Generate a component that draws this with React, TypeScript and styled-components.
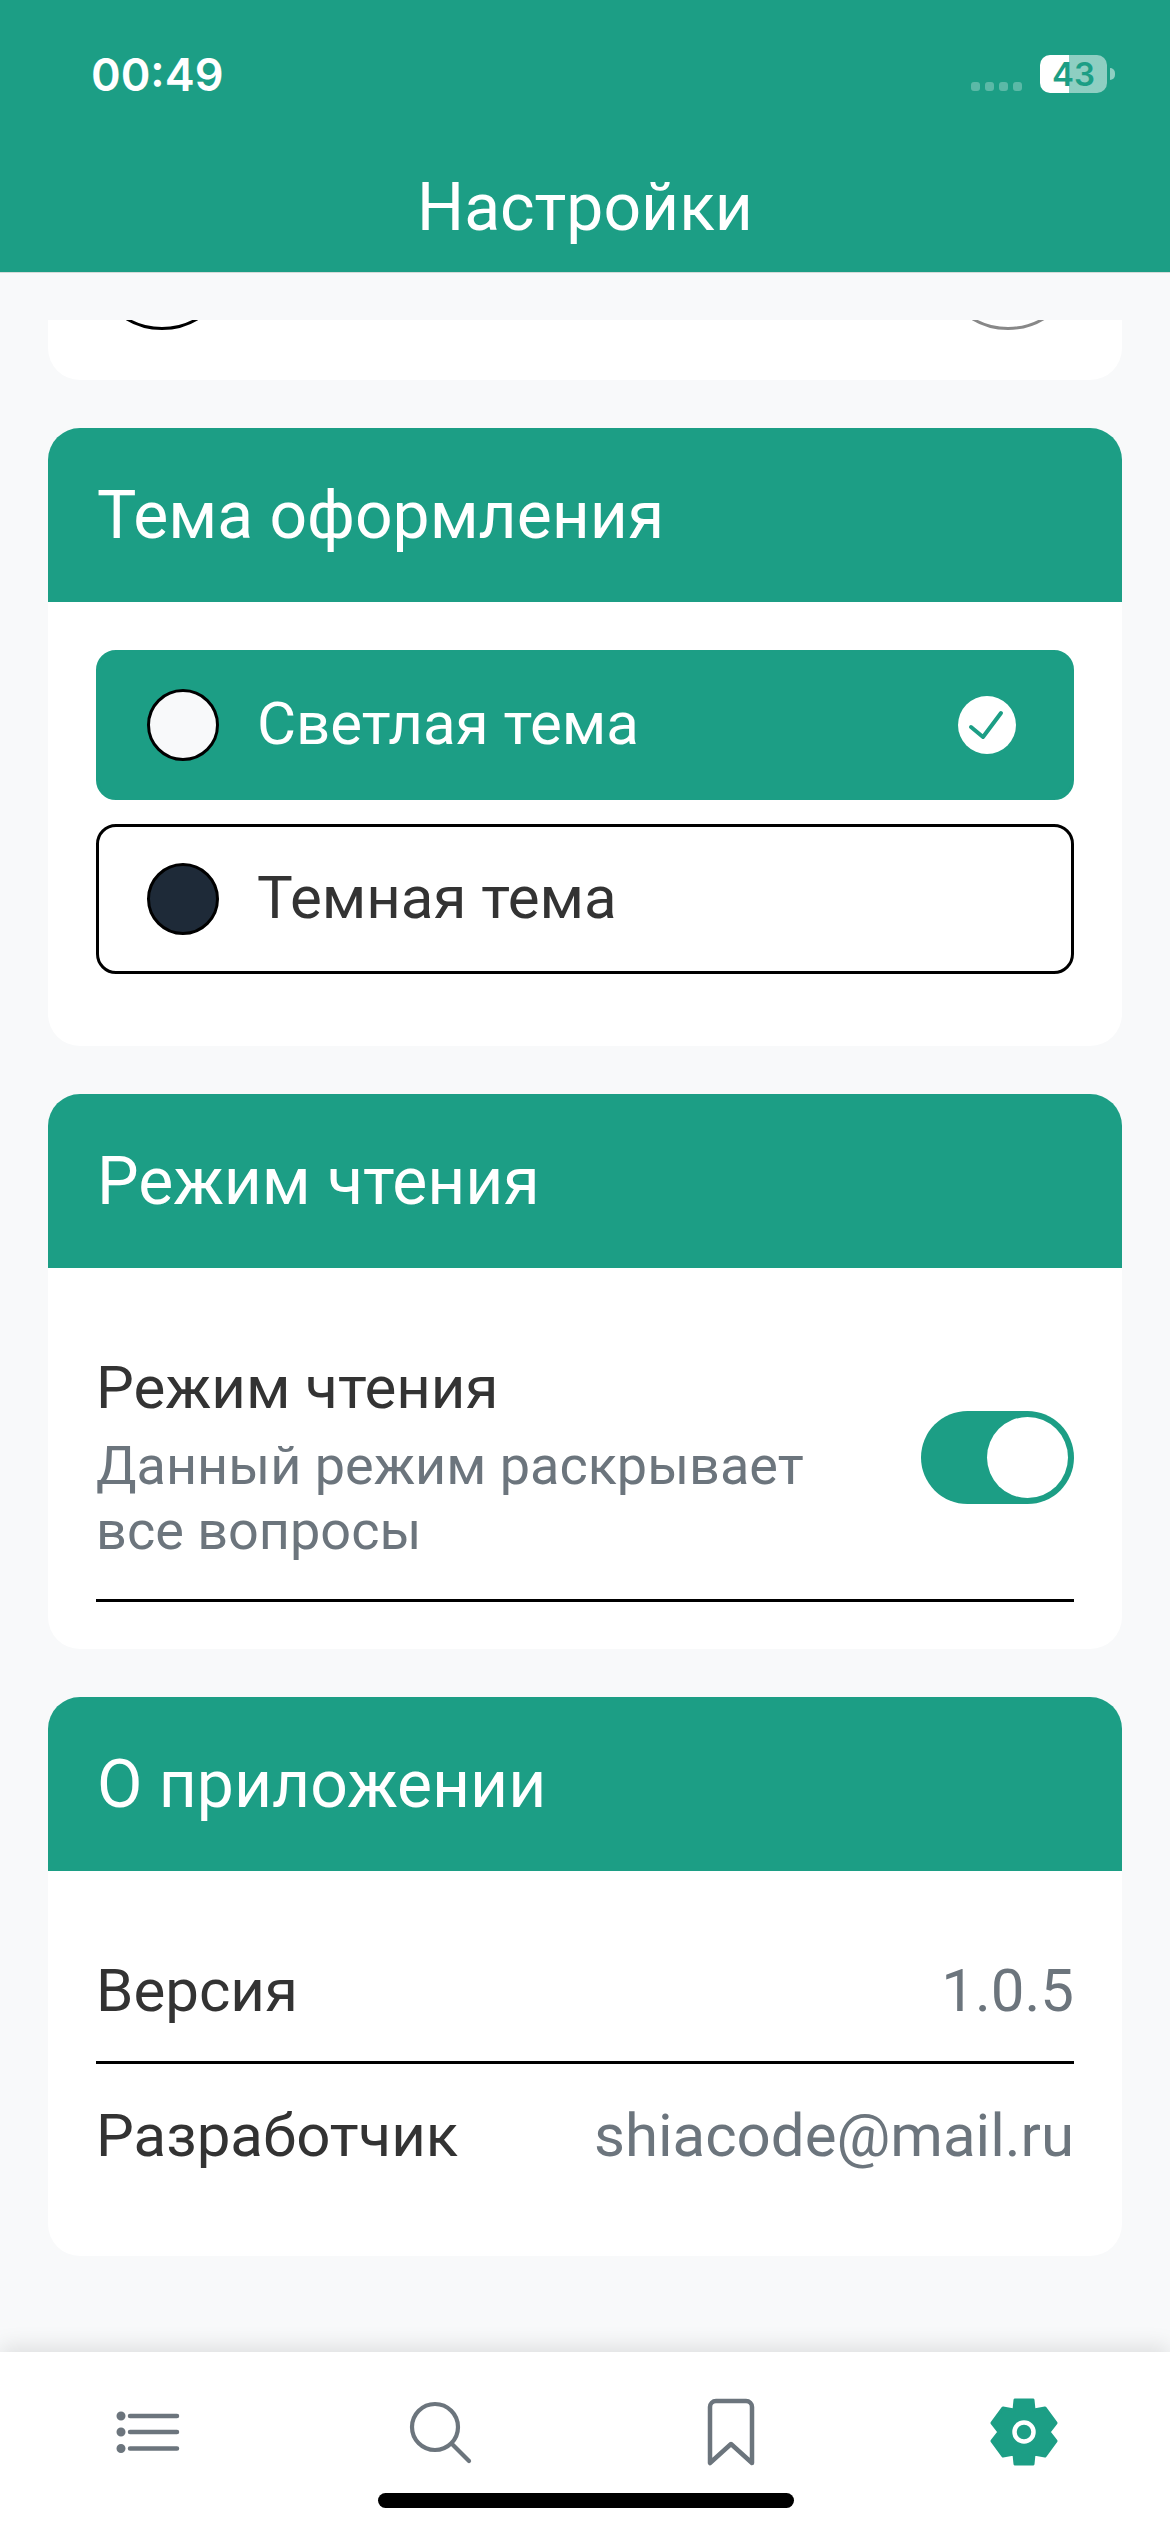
import styled, { createGlobalStyle } from 'styled-components'

const TEAL = '#1c9e85'
const GREY = '#6c757d'

const GlobalStyle = createGlobalStyle`
  html, body {
    margin: 0;
    padding: 0;
    background: #f8f9fa;
  }

  * {
    box-sizing: border-box;
  }
`

const Screen = styled.div`
  width: 1170px;
  height: 2532px;
  display: flex;
  flex-direction: column;
  background: #f8f9fa;
  font-family: Roboto, "Noto Sans", sans-serif;
  overflow: hidden;
`

const Header = styled.header`
  height: 273px;
  flex: none;
  display: flex;
  flex-direction: column;
  background: ${TEAL};
  border-bottom: 1px solid #d5dbd9;
`

const StatusBar = styled.div`
  height: 170px;
  padding: 47px 55px 0 91px;
  display: flex;
  justify-content: space-between;
  align-items: flex-start;
`

const Clock = styled.span`
  font-family: Inter, sans-serif;
  font-size: 45px;
  line-height: 56px;
  font-weight: 600;
  color: #fff;
`

const StatusIcons = styled.div`
  display: flex;
  align-items: flex-end;
  gap: 18px;
  margin-top: 8px;
  margin-right: 8px;
`

const SignalDots = styled.div`
  display: flex;
  gap: 5px;
  padding-bottom: 2px;
`

const SignalDot = styled.i`
  width: 9px;
  height: 9px;
  border-radius: 3px;
  background: rgba(255, 255, 255, 0.28);
`

const Battery = styled.div`
  position: relative;
  width: 67px;
  height: 38px;
  border-radius: 10px;
  background: linear-gradient(90deg, #fff 0 29px, rgba(255, 255, 255, 0.5) 29px);
  display: flex;
  align-items: center;
  justify-content: center;
  font-family: Inter, sans-serif;
  font-size: 33px;
  font-weight: 600;
  color: ${TEAL};

  &::after {
    content: '';
    position: absolute;
    left: 70px;
    top: 13px;
    width: 5px;
    height: 12px;
    border-radius: 0 6px 6px 0;
    background: rgba(255, 255, 255, 0.5);
  }
`

const Title = styled.h1`
  margin: 0;
  text-align: center;
  font-size: 66px;
  line-height: 76px;
  font-weight: 400;
  color: #fff;
`

const Content = styled.main`
  flex: 1;
  padding: 47px 48px 0;
  display: flex;
  flex-direction: column;
  gap: 48px;
`

const ClippedCard = styled.section`
  height: 60px;
  padding: 0 44px;
  display: flex;
  justify-content: space-between;
  background: #fff;
  border-radius: 0 0 32px 32px;
  overflow: hidden;
`

const ClippedCircle = styled.div<{ $color: string }>`
  width: 140px;
  height: 140px;
  margin-top: -130px;
  border-radius: 50%;
  border: 3px solid ${(props) => props.$color};
`

const Card = styled.section<{ $height: number }>`
  height: ${(props) => props.$height}px;
  background: #fff;
  border-radius: 32px;
  overflow: hidden;
`

const CardHeader = styled.h2`
  height: 174px;
  margin: 0;
  padding: 0 49px;
  display: flex;
  align-items: center;
  background: ${TEAL};
  color: #fff;
  font-size: 66px;
  font-weight: 400;
`

const CardBody = styled.div`
  padding: 48px 48px 0;
  display: flex;
  flex-direction: column;
`

const ThemeOptions = styled(CardBody)`
  gap: 24px;
`

const ThemeOption = styled.div<{ $active?: boolean }>`
  height: 150px;
  padding: 0 48px;
  display: flex;
  align-items: center;
  gap: 38px;
  border-radius: 20px;
  border: 3px solid ${(props) => (props.$active ? TEAL : '#000')};
  background: ${(props) => (props.$active ? TEAL : '#fff')};
  color: ${(props) => (props.$active ? '#fff' : '#333')};
  font-size: 60px;
`

const OptionLabel = styled.span`
  padding-bottom: 4px;
`

const Swatch = styled.span<{ $color: string }>`
  width: 72px;
  height: 72px;
  flex: none;
  border-radius: 50%;
  border: 3px solid #000;
  background: ${(props) => props.$color};
`

const CheckBadge = styled.svg`
  width: 58px;
  height: 58px;
  margin-left: auto;
  margin-right: 7px;
`

const ReadingRow = styled.div`
  height: 286px;
  display: flex;
  align-items: center;
  justify-content: space-between;
  border-bottom: 3px solid #000;
`

const ReadingText = styled.div`
  width: 760px;
`

const ReadingTitle = styled.div`
  margin-bottom: 10px;
  font-size: 60px;
  line-height: 70px;
  color: #333;
`

const ReadingHint = styled.div`
  font-size: 54px;
  line-height: 65px;
  color: ${GREY};
`

const Toggle = styled.div`
  width: 153px;
  height: 93px;
  padding: 6px;
  display: flex;
  justify-content: flex-end;
  border-radius: 47px;
  background: ${TEAL};
`

const ToggleKnob = styled.span`
  width: 81px;
  height: 81px;
  border-radius: 50%;
  background: #fff;
`

const AboutRow = styled.div<{ $divided?: boolean }>`
  height: ${(props) => (props.$divided ? 145 : 142)}px;
  display: flex;
  align-items: center;
  justify-content: space-between;
  border-bottom: ${(props) => (props.$divided ? '3px solid #000' : 'none')};
  font-size: 60px;
  color: #333;
`

const AboutValue = styled.span`
  color: ${GREY};
`

const TabBar = styled.nav`
  position: relative;
  height: 180px;
  flex: none;
  display: grid;
  grid-template-columns: repeat(4, 1fr);
  justify-items: center;
  background: #fff;
  box-shadow: 0 -6px 20px rgba(0, 0, 0, 0.1);
`

const TabIcon = styled.svg`
  width: 70px;
  height: 70px;
  margin-top: 45px;
`

const HomeIndicator = styled.div`
  position: absolute;
  left: 378px;
  top: 141px;
  width: 416px;
  height: 15px;
  border-radius: 8px;
  background: #000;
`

export default function App() {
  return (
    <Screen>
      <GlobalStyle />
      <Header>
        <StatusBar>
          <Clock>00:49</Clock>
          <StatusIcons>
            <SignalDots>
              <SignalDot />
              <SignalDot />
              <SignalDot />
              <SignalDot />
            </SignalDots>
            <Battery>43</Battery>
          </StatusIcons>
        </StatusBar>
        <Title>Настройки</Title>
      </Header>

      <Content>
        <ClippedCard>
          <ClippedCircle $color="#000" />
          <ClippedCircle $color="#888" />
        </ClippedCard>

        <Card $height={618}>
          <CardHeader>Тема оформления</CardHeader>
          <ThemeOptions>
            <ThemeOption $active>
              <Swatch $color="#f8f9fa" />
              <OptionLabel>Светлая тема</OptionLabel>
              <CheckBadge viewBox="0 0 58 58">
                <circle cx="29" cy="29" r="29" fill="#fff" />
                <path d="M13 31l12 10 18-24" fill="none" stroke={TEAL} strokeWidth="4" strokeLinecap="round" strokeLinejoin="round" />
              </CheckBadge>
            </ThemeOption>
            <ThemeOption>
              <Swatch $color="#1e2a38" />
              <OptionLabel>Темная тема</OptionLabel>
            </ThemeOption>
          </ThemeOptions>
        </Card>

        <Card $height={555}>
          <CardHeader>Режим чтения</CardHeader>
          <CardBody>
            <ReadingRow>
              <ReadingText>
                <ReadingTitle>Режим чтения</ReadingTitle>
                <ReadingHint>Данный режим раскрывает все вопросы</ReadingHint>
              </ReadingText>
              <Toggle>
                <ToggleKnob />
              </Toggle>
            </ReadingRow>
          </CardBody>
        </Card>

        <Card $height={559}>
          <CardHeader>О приложении</CardHeader>
          <CardBody>
            <AboutRow $divided>
              Версия
              <AboutValue>1.0.5</AboutValue>
            </AboutRow>
            <AboutRow>
              Разработчик
              <AboutValue>shiacode@mail.ru</AboutValue>
            </AboutRow>
          </CardBody>
        </Card>
      </Content>

      <TabBar>
        <TabIcon viewBox="-35 -35 70 70" fill="none" stroke={GREY} strokeWidth="4.5" strokeLinecap="round">
          <path d="M-16 -16H31M-16 0H31M-16 16.5H31" />
          <path d="M-25 -16h.01M-25 0h.01M-25 16.5h.01" strokeWidth="9" />
        </TabIcon>
        <TabIcon viewBox="-35 -35 70 70" fill="none" stroke={GREY} strokeWidth="4.2" strokeLinecap="round">
          <circle cx="-4" cy="-5" r="23" />
          <path d="M13 12L30 29" />
        </TabIcon>
        <TabIcon viewBox="-35 -35 70 70" fill="none" stroke={GREY} strokeWidth="4.5" strokeLinecap="round" strokeLinejoin="round">
          <path d="M-21 31V-25a6 6 0 0 1 6 -6H15a6 6 0 0 1 6 6V31L0 12Z" />
        </TabIcon>
        <TabIcon viewBox="-35 -35 70 70">
          <path
            d="M-9 -32H9L10 -22 21 -24 32 -9 25 0 32 9 21 24 10 22 9 32H-9L-10 22 -21 24 -32 9 -25 0 -32 -9 -21 -24 -10 -22Z"
            fill={TEAL}
            stroke={TEAL}
            strokeWidth="3"
            strokeLinejoin="round"
          />
          <circle r="9.5" fill={TEAL} stroke="#fff" strokeWidth="4.5" />
        </TabIcon>
        <HomeIndicator />
      </TabBar>
    </Screen>
  )
}
